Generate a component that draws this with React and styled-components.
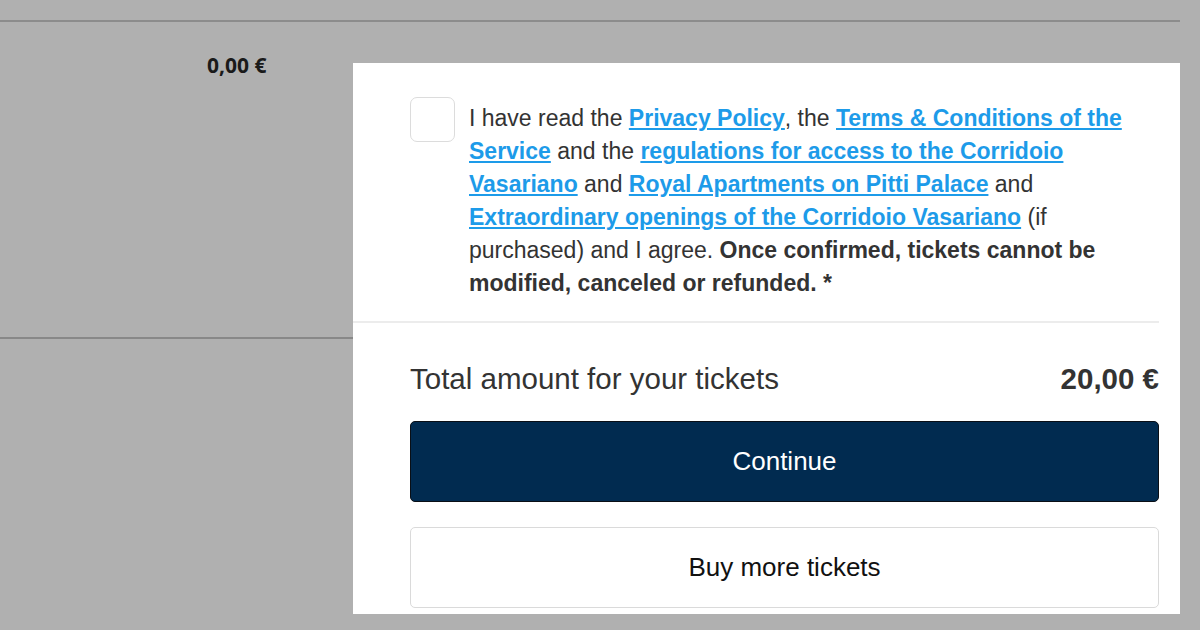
import React, { useState } from 'react';
import styled, { createGlobalStyle } from 'styled-components';

const GlobalStyle = createGlobalStyle`
    html, body {
        margin: 0;
        padding: 0;
        background: #b0b0b0;
        font-family: 'Liberation Sans', Arial, sans-serif;
    }
`;

const Page = styled.div`
    width: 1200px;
    height: 630px;
    overflow: hidden;
    background: #b0b0b0;
`;

const TopBar = styled.div`
    width: 1180px;
    height: 20px;
    border-bottom: 2px solid #8c8c8c;
`;

const Body = styled.div`
    display: flex;
    align-items: flex-start;
`;

const LeftCol = styled.div`
    width: 353px;
    flex-shrink: 0;
`;

const PriceRow = styled.div`
    height: 317px;
    border-bottom: 2px solid #888;
    padding: 29px 0 0 207px;
    box-sizing: border-box;
    font-family: 'Open Sans', sans-serif;
    font-weight: 700;
    font-size: 21px;
    color: #1a1a1a;
`;

const Panel = styled.div`
    margin-top: 41px;
    width: 827px;
    height: 551px;
    background: #fff;
    display: flex;
    flex-direction: column;
    padding: 0 21px 0 0;
    box-sizing: border-box;
`;

const Consent = styled.div`
    display: flex;
    align-items: flex-start;
    gap: 14px;
    padding: 34px 24px 21px 57px;
    border-bottom: 2px solid #ececec;
`;

const Check = styled.button`
    width: 45px;
    height: 45px;
    flex-shrink: 0;
    border: 1.5px solid #dcdcdc;
    border-radius: 7px;
    background: ${(p) => (p.checked ? '#012b50' : '#fff')};
    padding: 0;
    cursor: pointer;
`;

const ConsentText = styled.p`
    margin: 5px 0 0;
    font-size: 23px;
    line-height: 33px;
    color: #333;
`;

const Link = styled.a`
    color: #1d9be9;
    font-weight: 700;
    text-decoration: underline;
    text-underline-offset: 2px;
`;

const Strong = styled.strong`
    font-weight: 700;
    color: #333;
`;

const Footer = styled.div`
    padding: 38px 0 0 57px;
    display: flex;
    flex-direction: column;
`;

const TotalRow = styled.div`
    display: flex;
    justify-content: space-between;
    align-items: center;
    height: 36px;
    margin-bottom: 24px;
    color: #333;
`;

const TotalLabel = styled.span`
    font-size: 29.5px;
`;

const TotalValue = styled.span`
    font-size: 29.5px;
    font-weight: 700;
`;

const Button = styled.button`
    height: 81px;
    width: 100%;
    border-radius: 5px;
    font-family: 'Liberation Sans', Arial, sans-serif;
    font-size: 26px;
    cursor: pointer;
    margin-bottom: 25px;
    background: ${(p) => (p.primary ? '#012b50' : '#fff')};
    color: ${(p) => (p.primary ? '#fff' : '#111')};
    border: ${(p) => (p.primary ? '1.5px solid #0a0f16' : '1.5px solid #dadada')};
`;

function App() {
    const [agreed, setAgreed] = useState(false);

    return (
        <>
            <GlobalStyle />
            <Page>
                <TopBar />
                <Body>
                    <LeftCol>
                        <PriceRow>0,00 €</PriceRow>
                    </LeftCol>
                    <Panel>
                        <Consent>
                            <Check checked={agreed} onClick={() => setAgreed(!agreed)} aria-label="agree" />
                            <ConsentText>
                                I have read the <Link href="#">Privacy Policy</Link>, the{' '}
                                <Link href="#">Terms &amp; Conditions of the Service</Link> and the{' '}
                                <Link href="#">regulations for access to the Corridoio Vasariano</Link> and{' '}
                                <Link href="#">Royal Apartments on Pitti Palace</Link> and{' '}
                                <Link href="#">Extraordinary openings of the Corridoio Vasariano</Link> (if purchased)
                                and I agree.{' '}
                                <Strong>Once confirmed, tickets cannot be modified, canceled or refunded. *</Strong>
                            </ConsentText>
                        </Consent>
                        <Footer>
                            <TotalRow>
                                <TotalLabel>Total amount for your tickets</TotalLabel>
                                <TotalValue>20,00 €</TotalValue>
                            </TotalRow>
                            <Button primary>Continue</Button>
                            <Button>Buy more tickets</Button>
                        </Footer>
                    </Panel>
                </Body>
            </Page>
        </>
    );
}

export default App;
